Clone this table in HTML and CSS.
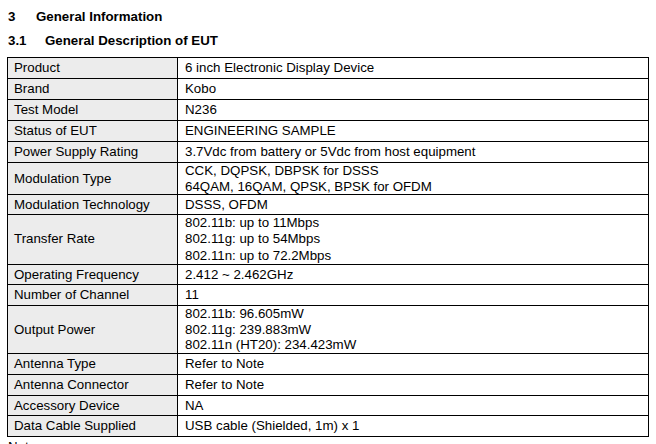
FILE: index.html
```html
<!DOCTYPE html>
<html>
<head>
<meta charset="utf-8">
<link rel="stylesheet" href="styles.css">
</head>
<body>
<div class="page">
  <h1 class="h1"><span class="num">3</span>General Information</h1>
  <h2 class="h2"><span class="num2">3.1</span>General Description of EUT</h2>
  <table class="spec">
    <tr><td class="k">Product</td><td class="v">6 inch Electronic Display Device</td></tr>
    <tr><td class="k">Brand</td><td class="v">Kobo</td></tr>
    <tr><td class="k">Test Model</td><td class="v">N236</td></tr>
    <tr><td class="k">Status of EUT</td><td class="v">ENGINEERING SAMPLE</td></tr>
    <tr><td class="k">Power Supply Rating</td><td class="v">3.7Vdc from battery or 5Vdc from host equipment</td></tr>
    <tr class="r2"><td class="k">Modulation Type</td><td class="v">CCK, DQPSK, DBPSK for DSSS<br>64QAM, 16QAM, QPSK, BPSK for OFDM</td></tr>
    <tr class="short"><td class="k">Modulation Technology</td><td class="v">DSSS, OFDM</td></tr>
    <tr class="r3"><td class="k">Transfer Rate</td><td class="v">802.11b: up to 11Mbps<br>802.11g: up to 54Mbps<br>802.11n: up to 72.2Mbps</td></tr>
    <tr class="short"><td class="k">Operating Frequency</td><td class="v">2.412 ~ 2.462GHz</td></tr>
    <tr><td class="k">Number of Channel</td><td class="v">11</td></tr>
    <tr class="r3b"><td class="k">Output Power</td><td class="v">802.11b: 96.605mW<br>802.11g: 239.883mW<br>802.11n (HT20): 234.423mW</td></tr>
    <tr><td class="k">Antenna Type</td><td class="v">Refer to Note</td></tr>
    <tr><td class="k">Antenna Connector</td><td class="v">Refer to Note</td></tr>
    <tr class="short"><td class="k">Accessory Device</td><td class="v">NA</td></tr>
    <tr><td class="k">Data Cable Supplied</td><td class="v">USB cable (Shielded, 1m) x 1</td></tr>
  </table>
  <p class="note">Note:</p>
</div>
</body>
</html>
```
FILE: styles.css
```css
html, body {
  margin: 0;
  padding: 0;
  background: #fff;
}
body {
  font-family: "Liberation Sans", Arial, sans-serif;
  color: #000;
  font-size: 13.3px;
}
.page {
  padding: 9px 0 0 7px;
  width: 642px;
}
.h1, .h2 {
  font-size: 13.3px;
  font-weight: bold;
  margin: 0;
  line-height: 16px;
  padding-left: 1px;
}
.h2 {
  margin-top: 8px;
}
.num {
  display: inline-block;
  width: 28px;
}
.num2 {
  display: inline-block;
  width: 37px;
}
.spec {
  margin-top: 8px;
  border-collapse: collapse;
  width: 642px;
  table-layout: fixed;
}
.spec td {
  border: 1px solid #000;
  padding: 0 6px;
  line-height: 16px;
  height: 20px;
  vertical-align: middle;
}
.spec td.k {
  width: 157px;
  background: #ececec;
}
.spec td.v {
  padding-left: 7px;
}
.spec tr.short td { height: 19px; }
.spec tr.r2 td { height: 31px; line-height: 15.5px; }
.spec tr.r3 td { height: 49px; line-height: 16.3px; }
.spec tr.r3b td { height: 47px; line-height: 15.6px; }
.note {
  margin: 2px 0 0 1px;
  line-height: 16px;
}
```
